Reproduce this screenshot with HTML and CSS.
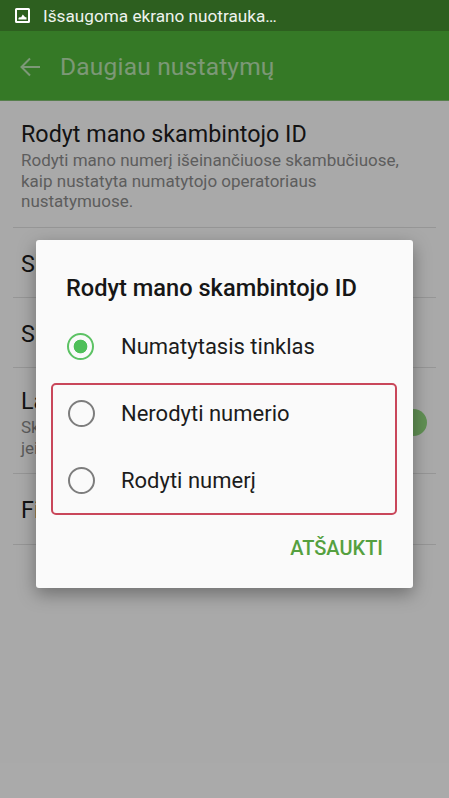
FILE: index.html
```html
<!DOCTYPE html>
<html lang="lt">
<head>
<meta charset="utf-8">
<title>Daugiau nustatymų</title>
<link rel="stylesheet" href="styles.css">
</head>
<body>
<div class="phone">
  <div class="status">
    <svg class="status-icon" viewBox="0 0 15 15" width="15" height="15" aria-hidden="true">
      <path fill="#fff" fill-rule="evenodd" d="M1.5 0h12A1.5 1.5 0 0 1 15 1.5v12a1.5 1.5 0 0 1-1.5 1.5h-12A1.5 1.5 0 0 1 0 13.5v-12A1.5 1.5 0 0 1 1.5 0zM2 2v11h11V2z"/>
      <path fill="#fff" d="M3.5 11.5V10l1.5-1 1 .6L7.8 6.6 10 9l1.5.6v1.9z"/>
    </svg>
    <span>Išsaugoma ekrano nuotrauka…</span>
  </div>
  <div class="screen">
    <header class="appbar">
      <svg class="back" viewBox="0 0 20 20" width="20" height="20" aria-hidden="true">
        <path d="M20 10H1.500M10 1.500 1.500 10l8.500 8.500" fill="none" stroke="#fff" stroke-width="2"/>
      </svg>
      <h1 class="appbar-title">Daugiau nustatymų</h1>
    </header>
    <main class="list">
      <div class="row row-first">
        <div class="row-title">Rodyt mano skambintojo ID</div>
        <div class="row-sub">Rodyti mano numerį išeinančiuose skambučiuose, kaip nustatyta numatytojo operatoriaus nustatymuose.</div>
      </div>
      <div class="row row-plain"><div class="row-title">Skambučio draudimas</div></div>
      <div class="row row-plain"><div class="row-title">Skambučių laukimas</div></div>
      <div class="row row-toggle">
        <div class="row-title">Laukiamas skambutis</div>
        <div class="row-sub">Skambučio metu pranešti apie kitus skambučius,<br>jei tinklas tai leidžia.</div>
        <span class="knob"></span>
      </div>
      <div class="row row-last"><div class="row-title">Fiksuotojo rinkimo numeriai</div></div>
    </main>
    <div class="scrim"></div>
    <section class="dialog">
      <h2 class="dialog-title">Rodyt mano skambintojo ID</h2>
      <div class="option option-first"><span class="radio radio-on"></span><span>Numatytasis tinklas</span></div>
      <div class="highlight">
        <div class="option"><span class="radio"></span><span>Nerodyti numerio</span></div>
        <div class="option"><span class="radio"></span><span>Rodyti numerį</span></div>
      </div>
      <div class="actions"><span class="cancel">ATŠAUKTI</span></div>
    </section>
  </div>
</div>
</body>
</html>
```
FILE: styles.css
```css
* { box-sizing: border-box; }
html, body { margin: 0; padding: 0; }
body { font-family: Roboto, "Noto Sans", sans-serif; background: #fafafa; }
.phone { width: 449px; height: 798px; overflow: hidden; display: flex; flex-direction: column; }
.status { height: 31px; flex: none; background: #2d5f1f; color: #fff; display: flex; align-items: center; gap: 13px; padding-left: 15px; font-size: 17.2px; }
.status span { opacity: .92; }
.status-icon { flex: none; }
.screen { position: relative; flex: 1; background: #fafafa; }
.appbar { height: 70px; background: #4fb339; display: flex; align-items: center; padding: 2px 0 0 20px; gap: 20px; border-bottom: 1px solid #7fbb70; }
.back { flex: none; opacity: .6; }
.appbar-title { margin: 0; font-size: 24.5px; font-weight: 400; color: rgba(255,255,255,.6); letter-spacing: .2px; }
.list { padding: 0 13px; }
.row { position: relative; border-bottom: 1px solid #ddd; padding: 0 8px; }
.row-first { height: 127px; padding-top: 19px; }
.row-plain { height: 70px; padding-top: 22px; }
.row-toggle { height: 106px; padding-top: 19px; }
.row-last { height: 71px; padding-top: 22px; }
.row-title { font-size: 23.3px; line-height: 28px; color: #1c1c1c; white-space: nowrap; }
.row-sub { font-size: 17px; line-height: 20.5px; color: #8a8a8a; width: 395px; margin-top: 2px; }
.knob { position: absolute; right: 9px; top: 41px; width: 27px; height: 27px; border-radius: 50%; background: #8fd47d; }
.scrim { position: absolute; inset: 0; background: rgba(0,0,0,.32); }
.dialog { position: absolute; left: 36px; top: 209px; width: 377px; height: 348px; background: #fafafa; border-radius: 3px; box-shadow: 0 6px 18px rgba(0,0,0,.35); padding: 32px 16px 0 15px; display: flex; flex-direction: column; }
.dialog-title { margin: 0 0 0 15px; font-size: 23.6px; line-height: 32px; font-weight: 500; color: #161616; white-space: nowrap; }
.option { height: 67px; display: flex; align-items: center; gap: 27px; padding-left: 16px; font-size: 22px; color: #1c1c1c; }
.option-first { margin-top: 9px; height: 66px; }
.radio { flex: none; width: 27px; height: 27px; border-radius: 50%; border: 2px solid #7d7d7d; background: #fafafa; }
.radio-on { border-color: #5cc264; background: radial-gradient(circle, #4fbf59 0 6.500px, #fafafa 7.200px); }
.highlight { height: 132px; margin-top: 4px; border: 2px solid #c9475a; border-radius: 5px; flex: none; }
.highlight .option { margin-left: -2px; padding-left: 17px; gap: 26px; }
.highlight .option:first-child { margin-top: -5px; }
.actions { display: flex; justify-content: flex-end; padding: 21px 14px 0 0; }
.cancel { font-size: 20px; font-weight: 500; line-height: 24px; color: #55a03f; }
```
